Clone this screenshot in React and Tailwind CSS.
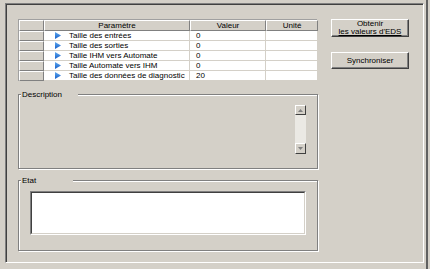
import React from "react";

const rows = [
  { name: "Taille des entrées", value: "0" },
  { name: "Taille des sorties", value: "0" },
  { name: "Taille IHM vers Automate", value: "0" },
  { name: "Taille Automate vers IHM", value: "0" },
  { name: "Taille des données de diagnostic", value: "20" },
];

const Arrow = () => (
  <svg width="6" height="7" viewBox="0 0 6 7" className="shrink-0">
    <defs>
      <linearGradient id="ar" x1="0" y1="0" x2="0" y2="1">
        <stop offset="0" stopColor="#5aa8f0" />
        <stop offset="1" stopColor="#1a5fc8" />
      </linearGradient>
    </defs>
    <polygon points="0,0 6,3.5 0,7" fill="url(#ar)" />
  </svg>
);

const HeadCell = ({ children }) => (
  <div className="flex items-center justify-center border-t border-l border-t-white border-l-white border-r border-b border-r-[#808080] border-b-[#808080] bg-[#d4d0c8] leading-none">
    {children}
  </div>
);

const GroupBox = ({ label, labelWidth, height, children }) => (
  <div
    className={`relative border border-[#808080] shadow-[inset_1px_1px_0_#fff,1px_1px_0_#fff] ${height}`}
  >
    <span
      className={`absolute left-[2px] top-[-5px] h-[10px] bg-[#d4d0c8] pl-[1px] leading-[10px] ${labelWidth}`}
    >
      {label}
    </span>
    {children}
  </div>
);

const Button = ({ children, h }) => (
  <div
    className={`flex w-[78px] flex-col items-center justify-center border border-t-white border-l-white border-r-[#404040] border-b-[#404040] shadow-[inset_-1px_-1px_0_#808080] leading-[8px] ${h}`}
  >
    {children}
  </div>
);

export default function App() {
  return (
    <div
      className="flex h-[269px] w-[430px] overflow-hidden bg-[#d4d0c8] text-[8px] text-black"
      style={{ fontFamily: '"Liberation Sans", Arial, sans-serif' }}
    >
      <div className="pl-[5px] pt-[3px]">
        <div className="h-[260px] w-[419px] border-l border-t border-l-[#808080] border-t-[#808080] border-r border-b border-r-white border-b-white">
          <div className="flex h-full border-l border-t border-l-[#404040] border-t-[#404040] pl-[11px] pt-[14px]">
            <div className="flex w-[300px] flex-col">
              {/* parameter table */}
              <div className="grid w-[299px] grid-cols-[25px_146px_76px_52px] grid-rows-[11px_repeat(5,10px)] border-t border-l border-[#a0a0a0] bg-white">
                <HeadCell />
                <HeadCell>Paramètre</HeadCell>
                <HeadCell>Valeur</HeadCell>
                <HeadCell>Unité</HeadCell>
                {rows.map((r) => (
                  <React.Fragment key={r.name}>
                    <HeadCell />
                    <div className="flex items-center gap-[8px] border-r border-b border-[#d4d0c8] pl-[11px] leading-none">
                      <Arrow />
                      <span>{r.name}</span>
                    </div>
                    <div className="flex items-center border-r border-b border-[#d4d0c8] pl-[6px] leading-none">
                      {r.value}
                    </div>
                    <div className="border-r border-b border-[#d4d0c8]" />
                  </React.Fragment>
                ))}
              </div>

              <div className="mt-[13px]">
                <GroupBox label="Description" labelWidth="w-[57px]" height="h-[75px]">
                  <div className="flex justify-end pr-[11px] pt-[10px]">
                    <div className="flex h-[49px] w-[11px] flex-col bg-[#ebe9e4]">
                      <div className="flex h-[10px] items-center justify-center border border-t-white border-l-white border-r-[#404040] border-b-[#404040] bg-[#d4d0c8]">
                        <svg width="5" height="3" viewBox="0 0 5 3">
                          <polygon points="0,3 2.5,0 5,3" fill="#808080" />
                        </svg>
                      </div>
                      <div className="flex-1" />
                      <div className="flex h-[11px] items-center justify-center border border-t-white border-l-white border-r-[#404040] border-b-[#404040] bg-[#d4d0c8]">
                        <svg width="5" height="3" viewBox="0 0 5 3">
                          <polygon points="0,0 2.5,3 5,0" fill="#808080" />
                        </svg>
                      </div>
                    </div>
                  </div>
                </GroupBox>
              </div>

              <div className="mt-[11px]">
                <GroupBox label="Etat" labelWidth="w-[52px]" height="h-[71px]">
                  <div className="px-[11px] pt-[10px]">
                    <div className="h-[44px] border-l border-t border-l-[#808080] border-t-[#808080] border-r border-b border-r-white border-b-white">
                      <div className="h-full border-l border-t border-l-[#404040] border-t-[#404040] border-r border-b border-r-[#d4d0c8] border-b-[#d4d0c8] bg-white" />
                    </div>
                  </div>
                </GroupBox>
              </div>
            </div>

            <div className="ml-[13px] flex flex-col gap-[15px]">
              <Button h="h-[18px]">
                <span>Obtenir</span>
                <span className="underline">les valeurs d'EDS</span>
              </Button>
              <Button h="h-[17px]">
                <span>Synchroniser</span>
              </Button>
            </div>
          </div>
        </div>
      </div>
      <div className="ml-[2px] h-full w-[2px] bg-[#606060]" />
    </div>
  );
}
